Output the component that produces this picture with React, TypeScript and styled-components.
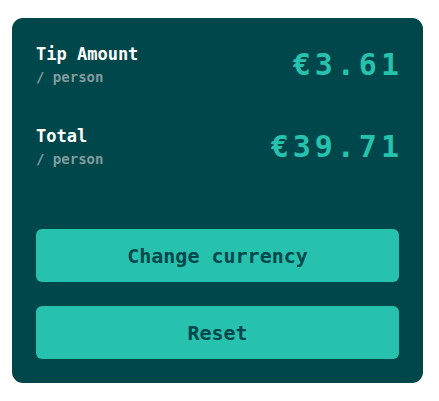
import React from "react";
import styled, { createGlobalStyle } from "styled-components";

const Global = createGlobalStyle`
  html, body { margin: 0; padding: 0; background: #ffffff; }
  body { font-family: "DejaVu Sans Mono", "Liberation Mono", monospace; }
  * { box-sizing: border-box; }
`;

const Page = styled.div`
  padding: 18px 16px 18px 12px;
`;

const Card = styled.section`
  width: 411px;
  height: 365px;
  background: #00474b;
  border-radius: 11px;
  padding: 26px 24px 24px;
  display: flex;
  flex-direction: column;
`;

const Rows = styled.div`
  display: flex;
  flex-direction: column;
  gap: 40px;
`;

const Row = styled.div`
  display: flex;
  align-items: center;
  justify-content: space-between;
`;

const LabelBlock = styled.div`
  display: flex;
  flex-direction: column;
  gap: 4px;
`;

const Title = styled.span`
  font-size: 17px;
  line-height: 20px;
  font-weight: 700;
  color: #ffffff;
`;

const Sub = styled.span`
  font-size: 14px;
  line-height: 18px;
  font-weight: 700;
  color: #7f9d9f;
`;

const Amount = styled.span`
  font-size: 30px;
  line-height: 32px;
  font-weight: 700;
  letter-spacing: 4px;
  margin-right: -4px;
  color: #26c2ae;
`;

const Actions = styled.div`
  margin-top: auto;
  display: flex;
  flex-direction: column;
  gap: 24px;
`;

const Button = styled.button`
  height: 53px;
  width: 100%;
  border: none;
  border-radius: 6px;
  background: #26c2ae;
  color: #00474b;
  font-family: "DejaVu Sans Mono", "Liberation Mono", monospace;
  font-size: 20px;
  font-weight: 700;
  cursor: pointer;
`;

const rows = [
  { title: "Tip Amount", value: "€3.61" },
  { title: "Total", value: "€39.71" },
];

export default function App() {
  return (
    <>
      <Global />
      <Page>
        <Card>
          <Rows>
            {rows.map((r) => (
              <Row key={r.title}>
                <LabelBlock>
                  <Title>{r.title}</Title>
                  <Sub>/ person</Sub>
                </LabelBlock>
                <Amount>{r.value}</Amount>
              </Row>
            ))}
          </Rows>
          <Actions>
            <Button>Change currency</Button>
            <Button>Reset</Button>
          </Actions>
        </Card>
      </Page>
    </>
  );
}
